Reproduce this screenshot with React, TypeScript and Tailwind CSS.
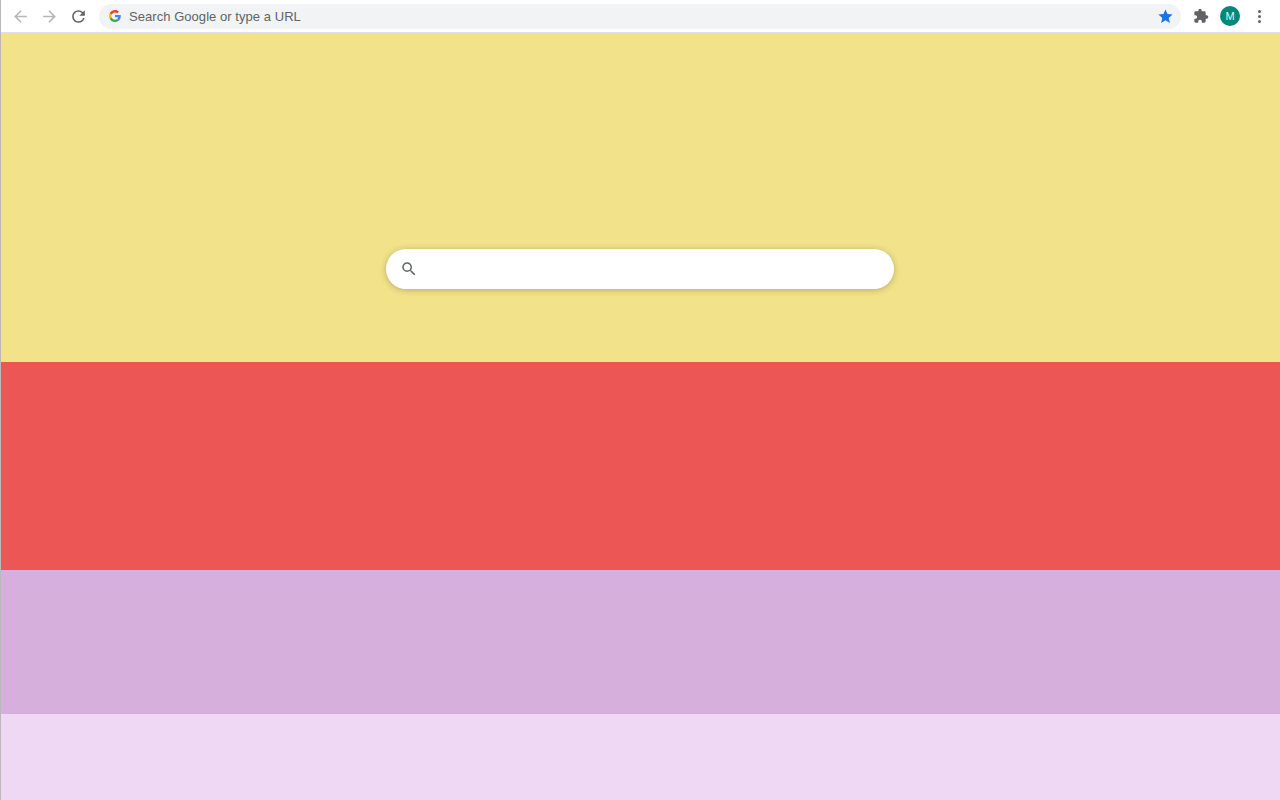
import React from "react";

const Arrow = ({ flip, className }: { flip?: boolean; className: string }) => (
  <svg viewBox="0 0 24 24" className={className} fill="currentColor" style={flip ? { transform: "scaleX(-1)" } : undefined}>
    <path d="M20 11H7.83l5.59-5.59L12 4l-8 8 8 8 1.41-1.41L7.83 13H20v-2z" />
  </svg>
);

const GoogleG = () => (
  <svg viewBox="0 0 48 48" className="w-3 h-3 shrink-0">
    <path fill="#EA4335" d="M24 9.5c3.5 0 6.7 1.2 9.2 3.6l6.9-6.9C35.9 2.4 30.5 0 24 0 14.6 0 6.5 5.4 2.6 13.2l8 6.2C12.5 13.6 17.8 9.5 24 9.5z" />
    <path fill="#4285F4" d="M47 24.5c0-1.6-.1-3.100-.4-4.500H24v9h12.900c-.6 3-2.200 5.500-4.700 7.200l7.700 6C44.400 38.500 47 32 47 24.500z" />
    <path fill="#FBBC05" d="M10.600 28.600c-.5-1.400-.8-3-.8-4.600s.3-3.200.8-4.600l-8-6.200C.9 16.500 0 20.100 0 24s.9 7.500 2.600 10.800l8-6.200z" />
    <path fill="#34A853" d="M24 48c6.500 0 11.900-2.100 15.900-5.800l-7.700-6c-2.200 1.400-4.900 2.300-8.200 2.300-6.200 0-11.500-4.100-13.400-9.900l-8 6.200C6.500 42.600 14.600 48 24 48z" />
  </svg>
);

export default function App() {
  return (
    <div className="h-[800px] w-[1280px] flex flex-col overflow-hidden bg-white border-l border-[#b9b9b9] font-['Liberation_Sans',sans-serif]">
      {/* browser toolbar */}
      <div className="h-[33px] shrink-0 flex items-center bg-white border-b border-[#dbe1ea]">
        <div className="flex items-center pl-[10px] gap-[10px]">
          <Arrow className="w-[19px] h-[19px] text-[#b3b6ba]" />
          <Arrow flip className="w-[19px] h-[19px] text-[#b3b6ba]" />
          <svg viewBox="0 0 24 24" className="w-[19px] h-[19px] text-[#5f6368]" fill="currentColor">
            <path d="M17.65 6.35A7.958 7.958 0 0 0 12 4c-4.420 0-7.990 3.580-7.990 8s3.570 8 7.990 8c3.730 0 6.840-2.550 7.730-6h-2.080A5.990 5.990 0 0 1 12 18c-3.310 0-6-2.690-6-6s2.690-6 6-6c1.660 0 3.140.69 4.220 1.780L13 11h7V4l-2.350 2.350z" />
          </svg>
        </div>
        <div className="ml-[11px] w-[1082px] h-[25px] flex items-center rounded-full bg-[#f1f3f4] pl-[10px] pr-[7px]">
          <GoogleG />
          <span className="ml-[8px] text-[13px] tracking-[0.05px] text-[#5f6368] leading-none">Search Google or type a URL</span>
          <svg viewBox="0 0 24 24" className="ml-auto w-[17px] h-[17px] text-[#1a73e8]" fill="currentColor">
            <path d="M12 17.270 18.180 21l-1.640-7.030L22 9.240l-7.190-.61L12 2 9.190 8.630 2 9.240l5.460 4.730L5.820 21z" />
          </svg>
        </div>
        <svg viewBox="0 0 24 24" className="ml-[12px] w-[16px] h-[16px] text-[#5f6368]" fill="currentColor">
          <path d="M20.500 11H19V7c0-1.100-.9-2-2-2h-4V3.500a2.500 2.500 0 0 0-5 0V5H4c-1.100 0-1.990.9-1.990 2v3.800H3.500c1.490 0 2.700 1.210 2.700 2.700s-1.210 2.700-2.700 2.700H2V20c0 1.100.9 2 2 2h3.800v-1.500c0-1.490 1.210-2.700 2.700-2.700s2.700 1.210 2.700 2.700V22H17c1.100 0 2-.9 2-2v-4h1.500a2.500 2.500 0 0 0 0-5z" />
        </svg>
        <div className="ml-[11px] w-[20px] h-[20px] rounded-full bg-[#00897b] flex items-center justify-center text-[#e6f3f1] text-[11px] leading-none">M</div>
        <div className="ml-[18px] flex flex-col gap-[2px]">
          <span className="w-[3px] h-[3px] rounded-full bg-[#5f6368]" />
          <span className="w-[3px] h-[3px] rounded-full bg-[#5f6368]" />
          <span className="w-[3px] h-[3px] rounded-full bg-[#5f6368]" />
        </div>
      </div>

      {/* page bands */}
      <div className="h-[329px] shrink-0 bg-[#f2e289] pt-[216px] flex justify-center">
        <div className="w-[508px] h-[40px] ml-[-1px] flex items-center rounded-full bg-white pl-[14px] shadow-[0_1px_6px_rgba(32,33,36,0.28)]">
          <svg viewBox="0 0 24 24" className="w-[18px] h-[18px] text-[#5f6368]" fill="currentColor">
            <path d="M15.500 14h-.79l-.28-.27A6.471 6.471 0 0 0 16 9.500 6.500 6.500 0 1 0 9.500 16c1.610 0 3.090-.59 4.230-1.570l.27.28v.79l5 4.990L20.490 19l-4.990-5zm-6 0C7.010 14 5 11.990 5 9.500S7.010 5 9.500 5 14 7.010 14 9.500 11.990 14 9.500 14z" />
          </svg>
        </div>
      </div>
      <div className="h-[208px] shrink-0 bg-[#ec5756]" />
      <div className="h-[144px] shrink-0 bg-[#d6afdd]" />
      <div className="flex-1 bg-[#eed8f4]" />
    </div>
  );
}
